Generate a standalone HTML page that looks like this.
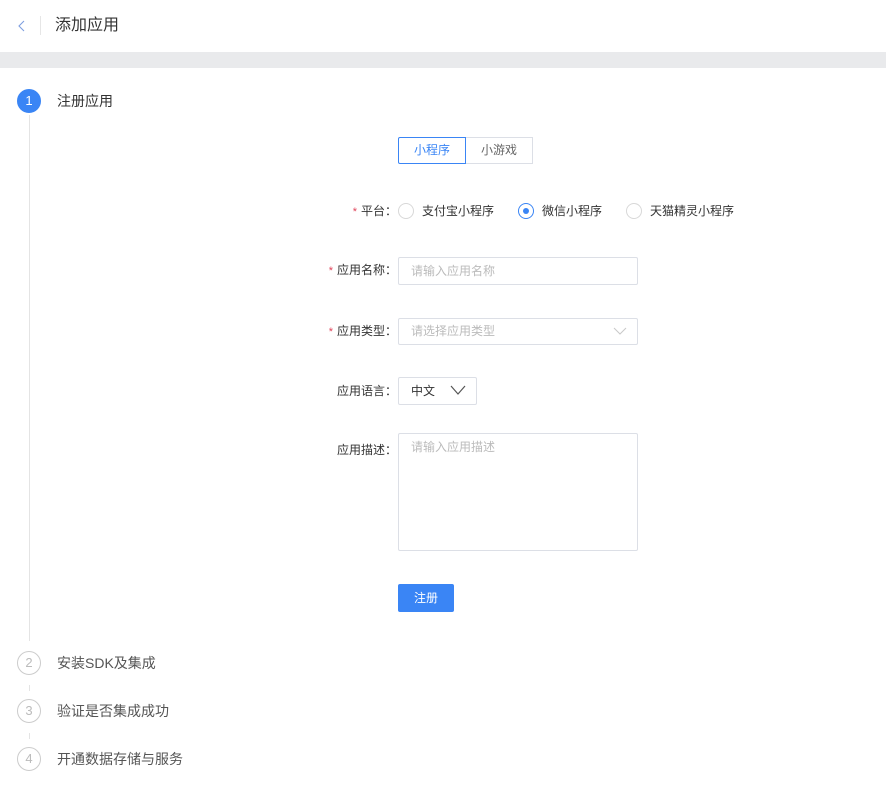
<!DOCTYPE html>
<html><head><meta charset="utf-8"><style>
*{margin:0;padding:0;box-sizing:border-box}
body{width:886px;height:797px;background:#fff;font-family:"Liberation Sans","Noto Sans CJK SC",sans-serif;font-size:12px;color:#333;position:relative;overflow:hidden}
.a{position:absolute}
.lbl{position:absolute;right:489px;text-align:right;white-space:nowrap;color:#333}
.st{color:#e0445a;margin-right:4px;font-size:11px}
.inp{position:absolute;left:398px;width:240px;border:1px solid #dcdfe6;border-radius:2px;color:#bbb;padding-left:12px}
.radio{position:absolute;top:203px;width:16px;height:16px;border:1px solid #d8d8d8;border-radius:50%}
.rt{position:absolute;top:203px;line-height:16px;color:#333}
.circ{position:absolute;left:17px;width:24px;height:24px;border-radius:50%;border:1px solid #ccc;color:#bbb;text-align:center;line-height:22px;font-size:13px}
.sl{position:absolute;left:57px;font-size:14px;color:#555;line-height:16px}
</style></head><body>
<svg class="a" style="left:17px;top:19px" width="10" height="14"><path d="M7 2 L2 7 L7 12" stroke="#7f9fe0" stroke-width="1.1" fill="none"/></svg>
<div class="a" style="left:40px;top:16px;width:1px;height:19px;background:#e6e6e6"></div>
<div class="a" style="left:55px;top:16px;font-size:16px;color:#333;line-height:20px">添加应用</div>
<div class="a" style="left:0;top:52px;width:886px;height:16px;background:#e9eaec"></div>
<div class="a" style="left:29px;top:115px;width:1px;height:526px;background:#e4e4e4"></div>
<div class="a" style="left:29px;top:685px;width:1px;height:6px;background:#e4e4e4"></div>
<div class="a" style="left:29px;top:733px;width:1px;height:6px;background:#e4e4e4"></div>
<div class="circ" style="top:89px;background:#3a85f5;border-color:#3a85f5;color:#fff">1</div>
<div class="sl" style="top:93px;color:#333">注册应用</div>
<div class="circ" style="top:651px">2</div><div class="sl" style="top:655px">安装SDK及集成</div>
<div class="circ" style="top:699px">3</div><div class="sl" style="top:703px">验证是否集成成功</div>
<div class="circ" style="top:747px">4</div><div class="sl" style="top:751px">开通数据存储与服务</div>

<div class="a" style="left:398px;top:137px;width:68px;height:27px;border:1px solid #3a85f5;border-radius:2px 0 0 2px;color:#3a85f5;text-align:center;line-height:25px">小程序</div>
<div class="a" style="left:466px;top:137px;width:67px;height:27px;border:1px solid #dcdfe6;border-left:none;color:#666;text-align:center;line-height:25px">小游戏</div>

<div class="lbl" style="top:203px;line-height:16px"><span class="st">*</span>平台：</div>
<div class="radio" style="left:398px"></div><div class="rt" style="left:422px">支付宝小程序</div>
<div class="radio" style="left:518px;border-color:#3a85f5"><div class="a" style="left:4px;top:4px;width:6px;height:6px;border-radius:50%;background:#3a85f5"></div></div><div class="rt" style="left:542px">微信小程序</div>
<div class="radio" style="left:626px"></div><div class="rt" style="left:650px">天猫精灵小程序</div>

<div class="lbl" style="top:262px;line-height:16px"><span class="st">*</span>应用名称：</div>
<div class="inp" style="top:257px;height:28px;line-height:26px">请输入应用名称</div>
<div class="lbl" style="top:323px;line-height:16px"><span class="st">*</span>应用类型：</div>
<div class="inp" style="top:318px;height:27px;line-height:25px">请选择应用类型</div>
<svg class="a" style="left:613px;top:326px" width="14" height="10"><path d="M1 2 L7 8 L13 2" stroke="#c8c8c8" fill="none"/></svg>
<div class="lbl" style="top:383px;line-height:16px">应用语言：</div>
<div class="inp" style="top:377px;width:79px;height:28px;line-height:26px;color:#333">中文</div>
<svg class="a" style="left:450px;top:385px" width="16" height="11"><path d="M1 1 L8 9 L15 1" stroke="#555" stroke-width="1.2" fill="none"/></svg>
<div class="lbl" style="top:442px;line-height:16px">应用描述：</div>
<div class="inp" style="top:433px;height:118px;line-height:26px">请输入应用描述</div>
<div class="a" style="left:398px;top:584px;width:56px;height:28px;background:#3a85f5;border-radius:2px;color:#fff;text-align:center;line-height:28px">注册</div>
</body></html>
